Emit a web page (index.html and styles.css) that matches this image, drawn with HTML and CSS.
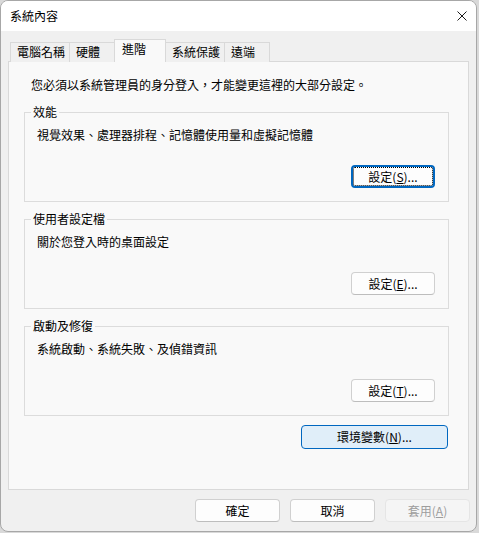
FILE: index.html
```html
<!DOCTYPE html>
<html lang="zh-Hant">
<head>
<meta charset="utf-8">
<title>系統內容</title>
<link rel="stylesheet" href="styles.css">
</head>
<body>
<div class="window">
  <div class="titlebar">
    <span class="title">系統內容</span>
    <span class="close" aria-label="關閉">
      <svg width="10" height="10" viewBox="0 0 10 10"><path d="M0.5 0.5L9.5 9.5M9.5 0.5L0.5 9.5" stroke="#1a1a1a" stroke-width="1" fill="none"/></svg>
    </span>
  </div>
  <div class="main">
    <div class="tabs">
      <div class="tab">電腦名稱</div>
      <div class="tab">硬體</div>
      <div class="tab tab-active">進階</div>
      <div class="tab">系統保護</div>
      <div class="tab">遠端</div>
    </div>
    <div class="panel">
      <p class="intro">您必須以系統管理員的身分登入，才能變更這裡的大部分設定。</p>
      <fieldset class="group">
        <legend>效能</legend>
        <p class="desc">視覺效果、處理器排程、記憶體使用量和虛擬記憶體</p>
        <div class="btn-row"><button class="btn btn-focus">設定(<u>S</u>)...</button></div>
      </fieldset>
      <fieldset class="group">
        <legend>使用者設定檔</legend>
        <p class="desc">關於您登入時的桌面設定</p>
        <div class="btn-row"><button class="btn">設定(<u>E</u>)...</button></div>
      </fieldset>
      <fieldset class="group">
        <legend>啟動及修復</legend>
        <p class="desc">系統啟動、系統失敗、及偵錯資訊</p>
        <div class="btn-row"><button class="btn">設定(<u>T</u>)...</button></div>
      </fieldset>
      <div class="env-row"><button class="btn btn-env">環境變數(<u>N</u>)...</button></div>
    </div>
    <div class="footer">
      <button class="btn btn-foot">確定</button>
      <button class="btn btn-foot">取消</button>
      <button class="btn btn-foot btn-disabled" disabled>套用(<u>A</u>)</button>
    </div>
  </div>
</div>
</body>
</html>
```

FILE: styles.css
```css
html, body {
  margin: 0;
  padding: 0;
  background: #d9d9d9;
}
body {
  font-family: "Noto Sans CJK TC", "Noto Sans", sans-serif;
  font-size: 12px;
  line-height: 16px;
  color: #000;
}
.window {
  box-sizing: border-box;
  width: 477px;
  height: 532px;
  border: 1px solid #a7a7a7;
  border-radius: 8px;
  overflow: hidden;
  background: #f0f0f0;
}
.titlebar {
  height: 30px;
  background: #ffffff;
  display: flex;
  align-items: center;
  justify-content: space-between;
  padding: 0 9px;
}
.title {
  font-size: 12px;
  line-height: 16px;
  margin-top: -1px;
}
.close {
  display: flex;
  width: 10px;
  height: 10px;
  margin-right: 0;
  margin-top: -1px;
}
.main {
  padding: 8px 0 0 7px;
}
.tabs {
  display: flex;
  align-items: flex-end;
  padding-left: 2px;
  margin-bottom: -1px;
  position: relative;
  z-index: 1;
}
.tab {
  box-sizing: border-box;
  height: 20px;
  min-width: 46px;
  padding: 1px 4px 0 6px;
  border: 1px solid #d9d9d9;
  border-bottom: none;
  background: #f0f0f0;
  margin-right: -1px;
  white-space: nowrap;
}
.tab-active {
  height: 23px;
  min-width: 52px;
  padding-left: 7px;
  background: #f9f9f9;
  position: relative;
  z-index: 2;
}
.panel {
  box-sizing: border-box;
  width: 461px;
  height: 429px;
  border: 1px solid #d9d9d9;
  background: #f9f9f9;
  padding: 15px 19px 0 15px;
}
.intro {
  margin: 0 0 11px 7px;
  white-space: nowrap;
}
.group {
  margin: 0 0 9px 0;
  padding: 0 13px 13px 12px;
  border: 1px solid #dcdcdc;
  min-width: 0;
}
.group legend {
  margin-left: -6px;
  padding: 0 2px;
  line-height: 16px;
}
.desc {
  margin: 7px 0 0 0;
  white-space: nowrap;
}
.btn-row {
  display: flex;
  justify-content: flex-end;
  margin-top: 22px;
}
.btn {
  box-sizing: border-box;
  font-family: inherit;
  font-size: 12px;
  line-height: 16px;
  color: #000;
  height: 23px;
  width: 84px;
  padding: 0;
  border: 1px solid #d0d0d0;
  border-bottom-color: #bdbdbd;
  border-radius: 4px;
  background: #fdfdfd;
  display: flex;
  align-items: center;
  justify-content: center;
}
.btn u {
  text-underline-offset: 1px;
}
.btn-focus {
  border: 2px solid #0067c0;
  outline: 1px dotted #000;
  outline-offset: -3px;
}
.env-row {
  display: flex;
  justify-content: flex-end;
  margin-top: 7px;
  padding-right: 1px;
}
.btn-env {
  width: 147px;
  height: 24px;
  background: #e0eef9;
  border: 1px solid #0067c0;
}
.footer {
  display: flex;
  justify-content: flex-end;
  gap: 10px;
  margin-top: 9px;
  padding-right: 6px;
}
.btn-foot {
  width: 85px;
}
.btn-disabled {
  background: #f5f5f5;
  border-color: #e5e5e5;
  color: #9d9d9d;
}
```
